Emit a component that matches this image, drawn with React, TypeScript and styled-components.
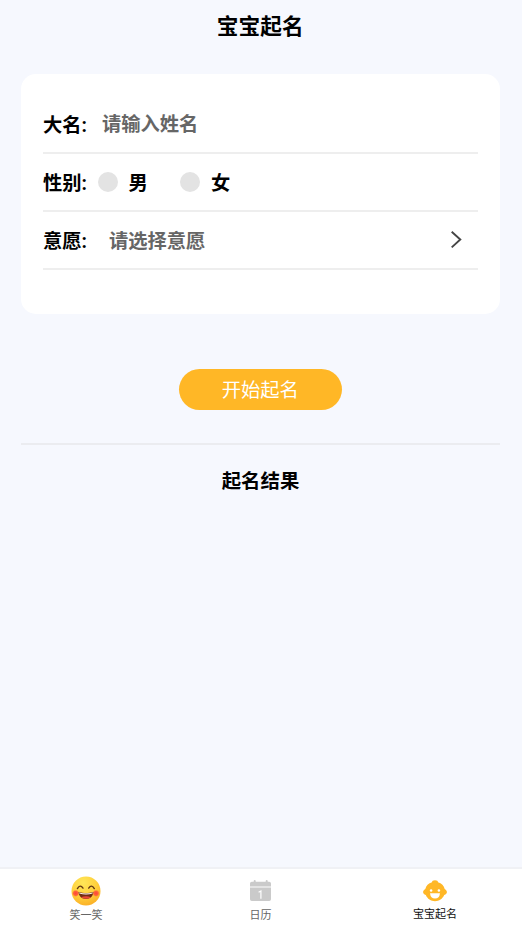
import React from 'react';
import styled, { createGlobalStyle } from 'styled-components';

const GlobalStyle = createGlobalStyle`
  * { box-sizing: border-box; }
  body { margin: 0; background: #f6f8fe; }
  button, input { font: inherit; }
`;

const Page = styled.div`
  display: flex;
  flex-direction: column;
  height: 929px;
  background: #f6f8fe;
  color: #000;
  font-family: "Noto Sans CJK SC", sans-serif;
  font-size: 19.3px;
  overflow: hidden;
`;

const Header = styled.h1`
  margin: 0;
  height: 74px;
  padding: 9px 1.5px 0 0;
  font-size: 21.7px;
  line-height: 32px;
  font-weight: 700;
  text-align: center;
`;

const Card = styled.section`
  height: 240px;
  margin: 0 22px 0 21px;
  padding: 22px 22px 0;
  border-radius: 15px;
  background: #fff;
`;

const Row = styled.div`
  display: flex;
  align-items: center;
  height: 58px;
  padding-right: 16.5px;
  border-bottom: 2px solid #eeeeee;
  font-weight: 700;
`;

const Label = styled.span<{ $gap: number }>`
  width: 44px;
  margin-right: ${({ $gap }) => $gap}px;
  white-space: nowrap;
`;

const Colon = styled.span`
  font-family: Roboto, sans-serif;
`;

const NameInput = styled.input`
  flex: 1;
  min-width: 0;
  height: 40px;
  padding: 0 0 2px;
  border: 0;
  outline: 0;
  background: transparent;
  &::placeholder { color: #666; opacity: 1; }
`;

const Choice = styled.span`
  flex: 1;
  color: #666;
`;

const Option = styled.label`
  display: flex;
  align-items: center;
  gap: 11px;
  width: 82.5px;
`;

const Dot = styled.span`
  width: 20px;
  height: 20px;
  border-radius: 50%;
  background: #e3e3e3;
`;

const StartButton = styled.button`
  align-self: center;
  width: 163.5px;
  height: 41px;
  margin: 55px 1.5px 33px 0;
  padding: 0;
  border: 0;
  border-radius: 21px;
  background: #ffb726;
  color: #fff;
  line-height: 41px;
`;

const Results = styled.section`
  flex: 1;
  margin: 0 22px 0 21px;
  padding-top: 20px;
  border-top: 2px solid #ebecf0;
`;

const ResultTitle = styled.h2`
  margin: 0;
  font-size: 19.4px;
  line-height: 30px;
  font-weight: 700;
  text-align: center;
`;

const TabBar = styled.nav`
  display: grid;
  grid-template-columns: repeat(3, 174.5px);
  height: 62px;
  border-top: 2px solid #f0f1f5;
  background: #fff;
`;

const Tab = styled.a<{ $active?: boolean }>`
  display: flex;
  flex-direction: column;
  align-items: center;
  padding-top: 7px;
  padding-right: 2.5px;
  color: ${({ $active }) => ($active ? '#111' : '#666')};
  font-size: 11px;
  line-height: 16px;
`;

const IconSlot = styled.span<{ $raised?: boolean }>`
  display: flex;
  align-items: center;
  justify-content: center;
  width: 30px;
  height: ${({ $raised }) => ($raised ? 29 : 30)}px;
`;

const SmileIcon = () => (
  <svg width="30" height="30" viewBox="0 0 30 30">
    <defs>
      <radialGradient id="face" cx="40%" cy="22%" r="80%">
        <stop offset="0" stopColor="#ffe758" />
        <stop offset=".6" stopColor="#ffcf3b" />
        <stop offset="1" stopColor="#fbb027" />
      </radialGradient>
      <radialGradient id="cheek">
        <stop offset="0" stopColor="#ff4338" />
        <stop offset=".6" stopColor="#ff5139" stopOpacity=".85" />
        <stop offset="1" stopColor="#ff7135" stopOpacity="0" />
      </radialGradient>
    </defs>
    <circle cx="15" cy="15" r="14.5" fill="url(#face)" />
    <ellipse cx="4.7" cy="17.3" rx="3.7" ry="3.6" fill="url(#cheek)" />
    <ellipse cx="25" cy="17.3" rx="3.7" ry="3.6" fill="url(#cheek)" />
    <path d="M6.4 12.6Q9.2 8 12 12.1M17.7 12.1Q20.5 8 23.3 12.6" fill="none" stroke="#633713" strokeWidth="1.4" strokeLinecap="round" />
    <path d="M7.5 16.1Q15 18.3 22.4 16.1C22 20.6 19 23 15 23S7.9 20.6 7.5 16.1Z" fill="#722c12" />
    <path d="M8 16.4Q15 18.4 21.9 16.4L21.5 17.6Q15 19.6 8.4 17.6Z" fill="#fff" />
    <path d="M10 21.2Q15 19.2 20 21.2Q15 24.5 10 21.2Z" fill="#e94736" />
  </svg>
);

const CalendarIcon = () => (
  <svg width="22" height="22" viewBox="0 0 22 22">
    <path d="M0 6.4V3.6Q0 1.8 1.8 1.8H3.7V.9Q3.7 0 4.7 0T5.7.9V1.8H15.7V.9Q15.7 0 16.7 0T17.7.9V1.8H19.2Q21 1.8 21 3.6V6.4ZM0 7.6H21V19.2Q21 21 19.2 21H1.8Q0 21 0 19.2Z" fill="#cacaca" />
    <path d="M8.6 12.3L10.9 11V18.8" fill="none" stroke="#fff" strokeWidth="1.2" />
  </svg>
);

const BabyIcon = () => (
  <svg width="24" height="22" viewBox="0 0 24 22">
    <path d="M12 .2C14 .2 15.1 1.1 15 2.2C18.6 3 21 5.7 21.7 9C23.2 9.8 23.9 10.9 23.9 12C23.9 13.3 23 14.6 21.2 15.1C19.5 19 16.1 21.3 12 21.3S4.5 19 2.8 15.1C1 14.6.1 13.3.1 12C.1 10.9.8 9.8 2.3 9C3 5.7 5.4 3 9 2.2C8.9 1.1 10 .2 12 .2Z" fill="#ffb726" />
    <circle cx="8.1" cy="10.4" r="1.25" fill="#fff" />
    <circle cx="15.9" cy="10.4" r="1.25" fill="#fff" />
    <path d="M7 13.3H17Q16.5 18.5 12 18.5T7 13.3Z" fill="#fff" />
  </svg>
);

const ArrowIcon = () => (
  <svg width="12" height="18" viewBox="0 0 12 18">
    <path d="M1.7 .8L10.3 8.5L1.7 16.4" fill="none" stroke="#444" strokeWidth="1.9" />
  </svg>
);

const tabs = [
  { label: '笑一笑', Icon: SmileIcon, active: false },
  { label: '日历', Icon: CalendarIcon, active: false },
  { label: '宝宝起名', Icon: BabyIcon, active: true },
];

export default function App() {
  return (
    <Page>
      <GlobalStyle />
      <Header>宝宝起名</Header>
      <Card>
        <Row>
          <Label $gap={15}>大名<Colon>:</Colon></Label>
          <NameInput placeholder="请输入姓名" />
        </Row>
        <Row>
          <Label $gap={10.5}>性别<Colon>:</Colon></Label>
          <Option><Dot />男</Option>
          <Option><Dot />女</Option>
        </Row>
        <Row>
          <Label $gap={22}>意愿<Colon>:</Colon></Label>
          <Choice>请选择意愿</Choice>
          <ArrowIcon />
        </Row>
      </Card>
      <StartButton>开始起名</StartButton>
      <Results>
        <ResultTitle>起名结果</ResultTitle>
      </Results>
      <TabBar>
        {tabs.map(({ label, Icon, active }) => (
          <Tab key={label} $active={active}>
            <IconSlot $raised={active}><Icon /></IconSlot>
            {label}
          </Tab>
        ))}
      </TabBar>
    </Page>
  );
}
